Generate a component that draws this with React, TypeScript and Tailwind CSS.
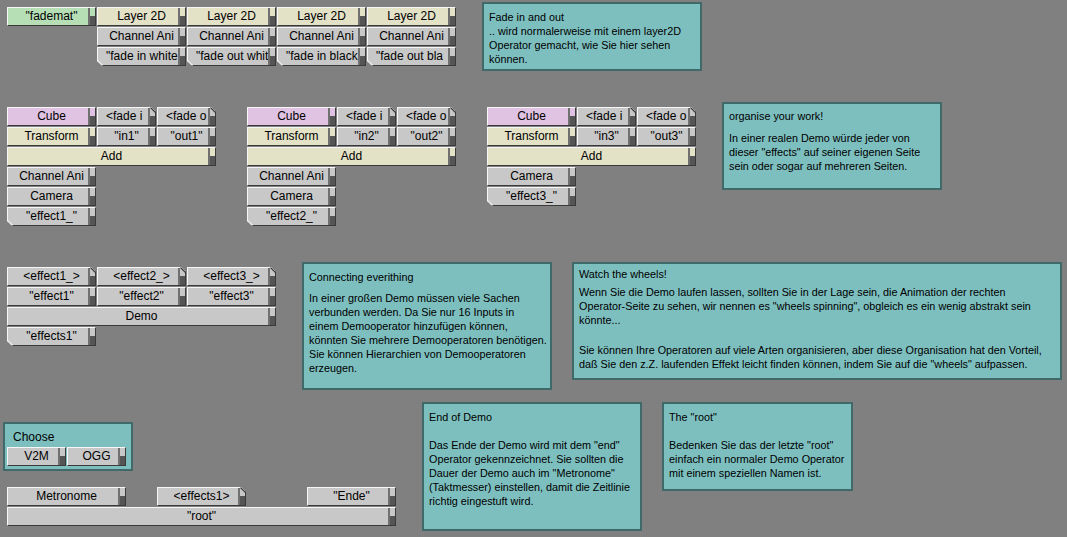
import React from "react";

type Kind = "n" | "l" | "s";
type Col = "g" | "c" | "p" | "m";
type OpDef = { c: number; r: number; w: number; t: string; col?: Col; k?: Kind; cut?: boolean };

const colorCls: Record<Col, string> = {
  g: "bg-[#c8c8c8]",
  c: "bg-[#e3e1c6]",
  p: "bg-[#e0c2e2]",
  m: "bg-[#b6dfb6]",
};

const shapeCls: Record<Kind, string> = {
  n: "",
  l: "[clip-path:polygon(0_0,calc(100%_-_5px)_0,100%_5px,100%_100%,0_100%)]",
  s: "[clip-path:polygon(0_0,100%_0,100%_100%,5px_100%,0_calc(100%_-_5px))]",
};

function Op({ c, r, w, t, col = "g", k = "n", cut = false }: OpDef) {
  const width = w * 30 - 1;
  return (
    <div
      className={`absolute h-[19px] box-border border-t border-l border-t-[#f6f6f6] border-l-[#f6f6f6] border-b border-r border-b-[#3a3a3a] border-r-[#3a3a3a] ${colorCls[col]} ${shapeCls[k]}`}
      style={{ left: 7 + c * 30, top: 7 + r * 20, width }}
    >
      <div
        className={`absolute top-0 bottom-0 left-0 overflow-hidden whitespace-nowrap text-[12px] leading-[17px] text-black [font-family:'Liberation_Sans',Arial,sans-serif] ${
          cut ? "right-[6px] pl-[8px] text-left" : "right-0 px-[7px] text-center"
        }`}
      >
        {t}
      </div>
      <div className={`absolute top-0 right-0 bottom-0 w-[7px] border-l-2 border-l-[#707070] ${colorCls[col]}`}>
        <div className="absolute right-0 bottom-0 left-0 h-[9px] bg-[#555555]" />
      </div>
      {k === "l" && (
        <svg className="absolute top-[-1px] right-[-1px]" width="7" height="7" viewBox="0 0 7 7">
          <line x1="1.5" y1="0.5" x2="6.5" y2="5.5" stroke="#3a3a3a" strokeWidth="1.2" />
        </svg>
      )}
      {k === "s" && (
        <svg className="absolute bottom-[-1px] left-[-1px]" width="7" height="7" viewBox="0 0 7 7">
          <line x1="0.5" y1="1.5" x2="5.5" y2="6.5" stroke="#f0f0f0" strokeWidth="1.2" />
        </svg>
      )}
    </div>
  );
}

const ops: OpDef[] = [
  { c: 0, r: 0, w: 3, t: "\"fademat\"", col: "m" },
  { c: 3, r: 0, w: 3, t: "Layer 2D", col: "c" },
  { c: 6, r: 0, w: 3, t: "Layer 2D", col: "c" },
  { c: 9, r: 0, w: 3, t: "Layer 2D", col: "c" },
  { c: 12, r: 0, w: 3, t: "Layer 2D", col: "c" },
  { c: 3, r: 1, w: 3, t: "Channel Ani" },
  { c: 6, r: 1, w: 3, t: "Channel Ani" },
  { c: 9, r: 1, w: 3, t: "Channel Ani" },
  { c: 12, r: 1, w: 3, t: "Channel Ani" },
  { c: 3, r: 2, w: 3, t: "\"fade in white", k: "s", cut: true },
  { c: 6, r: 2, w: 3, t: "\"fade out whit", k: "s", cut: true },
  { c: 9, r: 2, w: 3, t: "\"fade in black", k: "s", cut: true },
  { c: 12, r: 2, w: 3, t: "\"fade out bla", k: "s", cut: true },
];

[0, 8, 16].forEach((o, i) => {
  const n = i + 1;
  ops.push(
    { c: o, r: 5, w: 3, t: "Cube", col: "p" },
    { c: o + 3, r: 5, w: 2, t: "<fade i", k: "l", cut: true },
    { c: o + 5, r: 5, w: 2, t: "<fade o", k: "l", cut: true },
    { c: o, r: 6, w: 3, t: "Transform", col: "c" },
    { c: o + 3, r: 6, w: 2, t: `"in${n}"` },
    { c: o + 5, r: 6, w: 2, t: `"out${n}"` },
    { c: o, r: 7, w: 7, t: "Add", col: "c" }
  );
  if (n < 3) {
    ops.push(
      { c: o, r: 8, w: 3, t: "Channel Ani" },
      { c: o, r: 9, w: 3, t: "Camera" },
      { c: o, r: 10, w: 3, t: `"effect${n}_"`, k: "s" }
    );
  } else {
    ops.push(
      { c: o, r: 8, w: 3, t: "Camera" },
      { c: o, r: 9, w: 3, t: `"effect${n}_"`, k: "s" }
    );
  }
});

ops.push(
  { c: 0, r: 13, w: 3, t: "<effect1_>", k: "l" },
  { c: 3, r: 13, w: 3, t: "<effect2_>", k: "l" },
  { c: 6, r: 13, w: 3, t: "<effect3_>", k: "l" },
  { c: 0, r: 14, w: 3, t: "\"effect1\"" },
  { c: 3, r: 14, w: 3, t: "\"effect2\"" },
  { c: 6, r: 14, w: 3, t: "\"effect3\"" },
  { c: 0, r: 15, w: 9, t: "Demo" },
  { c: 0, r: 16, w: 3, t: "\"effects1\"", k: "s" },
  { c: 0, r: 24, w: 4, t: "Metronome" },
  { c: 5, r: 24, w: 3, t: "<effects1>", k: "l" },
  { c: 10, r: 24, w: 3, t: "\"Ende\"" },
  { c: 0, r: 25, w: 13, t: "\"root\"" }
);

const chooseOps: OpDef[] = [
  { c: 0, r: 22, w: 2, t: "V2M" },
  { c: 2, r: 22, w: 2, t: "OGG" },
];

function Lines({ lines }: { lines: string[] }) {
  return (
    <div>
      {lines.map((l, i) => (
        <div key={i} className="whitespace-nowrap">
          {l}
        </div>
      ))}
    </div>
  );
}

const noteBase =
  "absolute box-border border-2 border-[#406a6a] bg-[#7dbfbf] text-[10.8px] leading-[14px] text-black [font-family:'Liberation_Sans',Arial,sans-serif] px-[5px]";

export default function App() {
  return (
    <div className="relative w-[1067px] h-[537px] overflow-hidden bg-[#808080]">
      <div className="absolute left-[3px] top-[422px] w-[130px] h-[49px] box-border border-2 border-[#406a6a] bg-[#7dbfbf] pl-[8px] pt-[6px] text-[12px] leading-[14px] text-black [font-family:'Liberation_Sans',Arial,sans-serif]">
        Choose
      </div>

      {ops.map((o, i) => (
        <Op key={i} {...o} />
      ))}
      {chooseOps.map((o, i) => (
        <Op key={"c" + i} {...o} />
      ))}

      <div className={`${noteBase} left-[482px] top-[2px] w-[220px] h-[69px] pt-[6px]`}>
        <Lines
          lines={[
            "Fade in and out",
            ".. wird normalerweise mit einem layer2D",
            "Operator gemacht, wie Sie hier sehen",
            "können.",
          ]}
        />
      </div>

      <div className={`${noteBase} left-[722px] top-[102px] w-[220px] h-[88px] pt-[5px]`}>
        <Lines lines={["organise your work!"]} />
        <div className="mt-[8px]">
          <Lines
            lines={[
              "In einer realen Demo würde jeder von",
              "dieser \"effects\" auf seiner eigenen Seite",
              "sein oder sogar auf mehreren Seiten.",
            ]}
          />
        </div>
      </div>

      <div className={`${noteBase} left-[302px] top-[262px] w-[250px] h-[128px] pt-[6px]`}>
        <Lines lines={["Connecting everithing"]} />
        <div className="mt-[7px]">
          <Lines
            lines={[
              "In einer großen Demo müssen viele Sachen",
              "verbunden werden. Da Sie nur 16 Inputs in",
              "einem Demooperator hinzufügen können,",
              "könnten Sie mehrere Demooperatoren benötigen.",
              "Sie können Hierarchien von Demooperatoren",
              "erzeugen.",
            ]}
          />
        </div>
      </div>

      <div className={`${noteBase} left-[572px] top-[262px] w-[490px] h-[118px] pt-[3px]`}>
        <Lines lines={["Watch the wheels!"]} />
        <div className="mt-[4px]">
          <Lines
            lines={[
              "Wenn Sie die Demo laufen lassen, sollten Sie in der Lage sein, die Animation der rechten",
              "Operator-Seite zu sehen, wir nennen es \"wheels spinning\", obgleich es ein wenig abstrakt sein",
              "könnte...",
            ]}
          />
        </div>
        <div className="mt-[16px]">
          <Lines
            lines={[
              "Sie können Ihre Operatoren auf viele Arten organisieren, aber diese Organisation hat den Vorteil,",
              "daß Sie den z.Z. laufenden Effekt leicht finden können, indem Sie auf die \"wheels\" aufpassen.",
            ]}
          />
        </div>
      </div>

      <div className={`${noteBase} left-[422px] top-[402px] w-[220px] h-[129px] pt-[6px]`}>
        <Lines lines={["End of Demo"]} />
        <div className="mt-[14px]">
          <Lines
            lines={[
              "Das Ende der Demo wird mit dem \"end\"",
              "Operator gekennzeichnet. Sie sollten die",
              "Dauer der Demo auch im \"Metronome\"",
              "(Taktmesser) einstellen, damit die Zeitlinie",
              "richtig eingestuft wird.",
            ]}
          />
        </div>
      </div>

      <div className={`${noteBase} left-[662px] top-[402px] w-[191px] h-[89px] pt-[6px]`}>
        <Lines lines={["The \"root\""]} />
        <div className="mt-[14px]">
          <Lines
            lines={[
              "Bedenken Sie das der letzte \"root\"",
              "einfach ein normaler Demo Operator",
              "mit einem speziellen Namen ist.",
            ]}
          />
        </div>
      </div>
    </div>
  );
}
